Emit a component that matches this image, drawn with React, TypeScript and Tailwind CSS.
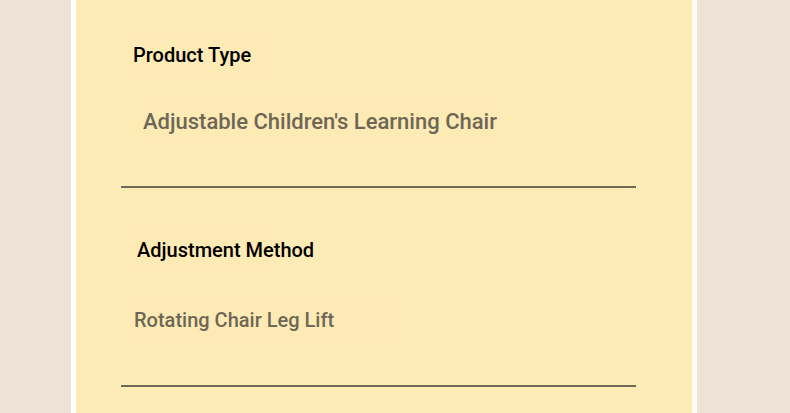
const rows = [
  {
    label: "Product Type",
    value: "Adjustable Children's Learning Chair",
    labelBox: "ml-[51px] mt-[28px] w-[156px] h-[54px] pl-[6px]",
    valueBox: "ml-[59px] mt-[13px] w-[362px] h-[52px] pl-[8px] text-[22px]",
    lineGap: "mt-[39px]",
  },
  {
    label: "Adjustment Method",
    value: "Rotating Chair Leg Lift",
    labelBox: "ml-[47px] mt-[36px] w-[162px] h-[52px] pl-[14px]",
    valueBox: "ml-[48px] mt-[19px] w-[274px] h-[50px] pl-[10px] text-[20px]",
    lineGap: "mt-[40px]",
  },
];

export default function App() {
  return (
    <div
      className="w-[790px] h-[413px] overflow-hidden bg-[#efe3d8]"
      style={{ fontFamily: "Roboto, 'Liberation Sans', sans-serif" }}
    >
      <div className="ml-[71px] w-[626px] h-full border-x-[5px] border-l-white border-r-[#fffdf2] bg-[#feecb7] flex flex-col">
        {rows.map((row, i) => (
          <div key={i} className="flex flex-col">
            <div className={`${row.labelBox} flex items-center rounded-sm bg-[#fde9b2]/60`}>
              <span className="whitespace-nowrap text-[20px] font-medium text-black">{row.label}</span>
            </div>
            <div className={`${row.valueBox} flex items-center rounded-sm bg-[#fde9b2]/60`}>
              <span className="whitespace-nowrap font-medium text-[#6c6756]">{row.value}</span>
            </div>
            <div className={`${row.lineGap} ml-[45px] w-[515px] h-[2px] bg-[#6f6a55]`} />
          </div>
        ))}
      </div>
    </div>
  );
}
